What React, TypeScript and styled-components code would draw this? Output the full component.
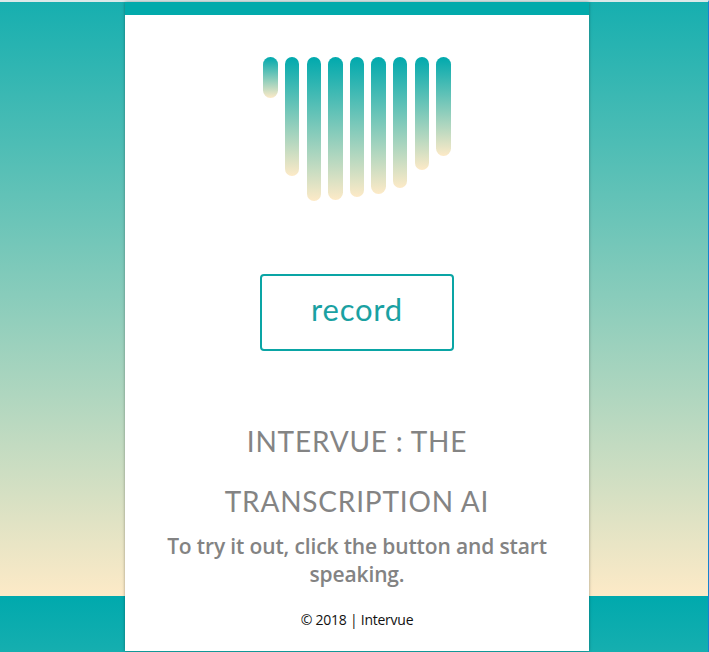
import React from 'react';
import styled, { createGlobalStyle } from 'styled-components';

const GlobalStyle = createGlobalStyle`
  * { box-sizing: border-box; }
  body { margin: 0; overflow: hidden; }
`;

const Page = styled.div`
  height: 652px;
  display: flex;
  justify-content: center;
  padding: 0 119px 0 125px;
  border-top: 2px solid #dbe9e9;
  border-right: 1px solid #1683cf;
  background: linear-gradient(to bottom, #00a9ad, #fdeac7) 0 -58px / 100% 652px repeat-y;
  font-family: 'Open Sans', sans-serif;
`;

const Card = styled.main`
  flex: 0 0 464px;
  height: 649px;
  display: flex;
  flex-direction: column;
  align-items: center;
  background: #fff;
  border-top: 13px solid #02aaab;
  box-shadow: 0 0 3px rgba(0, 0, 0, 0.35);
`;

const Bars = styled.div`
  display: flex;
  align-items: flex-start;
  gap: 7.1px;
  height: 144px;
  margin-top: 42px;
`;

const Bar = styled.div<{ $height: number }>`
  width: 14.5px;
  height: ${({ $height }) => $height}px;
  border-radius: 8px;
  background: linear-gradient(to bottom, #00a9ad, #fdeac7);
`;

const RecordButton = styled.button`
  width: 194px;
  height: 77px;
  margin-top: 73px;
  padding: 0 0 6px;
  border: 2px solid #0aa5a5;
  border-radius: 4px;
  background: #fff;
  color: #1aa1a2;
  font: 400 31px/1 Lato, sans-serif;
  letter-spacing: 0.8px;
`;

const Title = styled.h1`
  width: 300px;
  margin: 60px 0 0;
  color: #848484;
  font-family: Lato, sans-serif;
  font-size: 28px;
  font-weight: 400;
  line-height: 60px;
  letter-spacing: 0.8px;
  text-align: center;
`;

const Hint = styled.h2`
  width: 424px;
  margin: 1px 0 0;
  color: #838383;
  font-size: 21px;
  font-weight: 600;
  line-height: 28px;
  letter-spacing: -0.14px;
  text-align: center;
`;

const Footer = styled.footer`
  margin-top: 22px;
  color: #111;
  font-size: 14px;
  line-height: 20px;
  letter-spacing: -0.25px;
`;

const heights = [41, 119, 144, 143, 140, 137, 131, 113, 99];

export default function App() {
  return (
    <Page>
      <GlobalStyle />
      <Card>
        <Bars>
          {heights.map((height, index) => (
            <Bar key={index} $height={height} />
          ))}
        </Bars>
        <RecordButton>record</RecordButton>
        <Title>INTERVUE : THE TRANSCRIPTION AI</Title>
        <Hint>To try it out, click the button and start speaking.</Hint>
        <Footer>© 2018 | Intervue</Footer>
      </Card>
    </Page>
  );
}
